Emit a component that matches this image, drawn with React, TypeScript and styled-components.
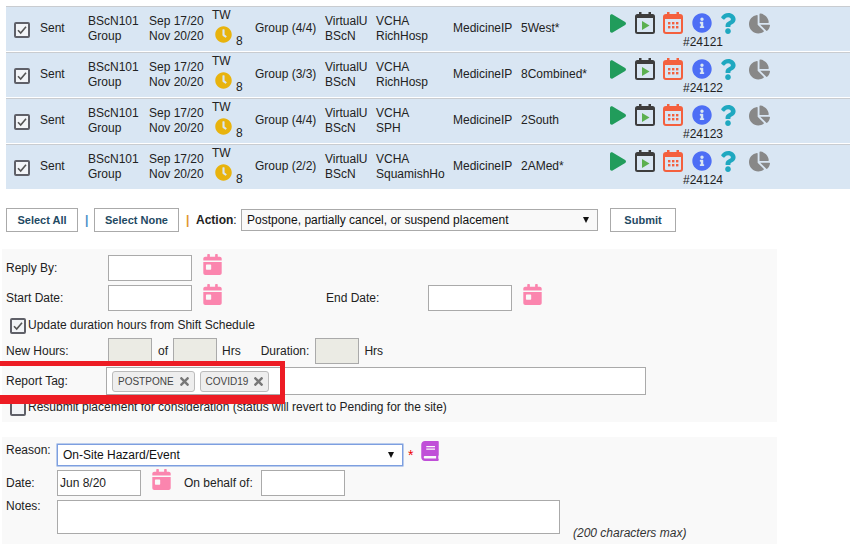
import React from 'react';
import styled, { createGlobalStyle } from 'styled-components';
import {
  FaBook,
  FaCalendarDay,
  FaChartPie,
  FaClock,
  FaInfoCircle,
  FaPlay,
  FaQuestion,
  FaTimes,
} from 'react-icons/fa';

const GlobalStyle = createGlobalStyle`
  html, body {
    margin: 0;
    padding: 0;
    background: #fff;
    overflow: hidden;
  }
  body {
    font-family: 'Liberation Sans', Arial, sans-serif;
    font-size: 12px;
    color: #222;
  }
`;

const Page = styled.div`
  position: relative;
  width: 856px;
  height: 549px;
  padding-top: 6px;
  box-sizing: border-box;
`;

/* placements table */
const Table = styled.div`
  margin-left: 6px;
  width: 844px;
`;
const Row = styled.div`
  display: grid;
  grid-template-columns: 34px 48px 61px 63px 43px 70px 51px 77px 68px 89px 1fr;
  align-items: center;
  height: 44px;
  background: #d9e6f3;
  border-top: 1px solid #c9ccd0;
  border-bottom: 1px solid #fff;
  line-height: 15px;
`;
const CheckCell = styled.div`
  padding-left: 8px;
  padding-top: 2px;
`;
const Cell = styled.div`
  padding-bottom: 2px;
  white-space: nowrap;
`;
const Stack = styled.div`
  white-space: nowrap;
`;
const Line = styled.div``;
const ClockCell = styled.div`
  align-self: start;
  padding-top: 1px;
  line-height: 14px;
`;
const ClockRow = styled.div`
  display: flex;
  align-items: flex-end;
  margin-top: 4px;
  color: #e8b30d;
`;
const Hours = styled.span`
  margin-left: 4px;
  margin-bottom: -5px;
  color: #222;
`;
const ActionCell = styled.div`
  align-self: start;
  padding-top: 5px;
`;
const IconRow = styled.div`
  display: flex;
  align-items: center;
  height: 22px;
`;
const IconSlot = styled.span<{ $w: number; $c: string }>`
  display: flex;
  justify-content: center;
  width: ${(p) => p.$w}px;
  color: ${(p) => p.$c};
`;
const PlacementId = styled.div`
  margin-left: 73px;
  margin-top: 1px;
`;

const Box = styled.span`
  display: inline-flex;
  align-items: center;
  justify-content: center;
  box-sizing: border-box;
  width: 16px;
  height: 16px;
  background: #f2f4f7;
  border: 2px solid #5f6068;
  border-radius: 2px;
  flex: none;
`;

/* action toolbar */
const Toolbar = styled.div`
  display: flex;
  align-items: center;
  margin: 18px 0 0 6px;
  height: 24px;
`;
const Button = styled.button<{ $w: number }>`
  width: ${(p) => p.$w}px;
  height: 24px;
  padding: 0;
  box-sizing: border-box;
  background: #fff;
  border: 1px solid #aaa;
  font-family: 'Liberation Sans', Arial, sans-serif;
  font-size: 11px;
  font-weight: bold;
  color: #1f4a63;
`;
const Pipe = styled.span<{ $c: string; $m: string }>`
  width: 3px;
  color: ${(p) => p.$c};
  margin: ${(p) => p.$m};
  font-weight: bold;
`;
const ActionLabel = styled.span`
  width: 45px;
  font-weight: bold;
  b {
    font-weight: normal;
  }
`;
const Select = styled.div<{ $focus?: boolean; $w: number; $bg?: string }>`
  display: flex;
  align-items: center;
  justify-content: space-between;
  box-sizing: border-box;
  width: ${(p) => p.$w}px;
  height: 22px;
  padding: 0 8px 0 5px;
  background: ${(p) => p.$bg || '#fff'};
  border: 1px solid ${(p) => (p.$focus ? '#7d9fe0' : '#aaa')};
  box-shadow: ${(p) => (p.$focus ? '0 0 0 0.5px #7d9fe0' : 'none')};
  color: #111;
`;
const Caret = styled.span`
  width: 0;
  height: 0;
  border-left: 3.5px solid transparent;
  border-right: 3.5px solid transparent;
  border-top: 6px solid #111;
`;

/* form panels */
const Panel = styled.div<{ $top: number; $h: number; $pad?: number }>`
  margin: ${(p) => p.$top}px 0 0 2px;
  padding-top: ${(p) => p.$pad || 0}px;
  width: 775px;
  height: ${(p) => p.$h}px;
  box-sizing: border-box;
  background: #f9f9f9;
`;
const FieldRow = styled.div<{ $h?: number; $mt?: number }>`
  display: flex;
  align-items: center;
  height: ${(p) => p.$h || 26}px;
  margin-top: ${(p) => p.$mt || 0}px;
  padding-left: 4px;
`;
const CheckRow = styled.div<{ $h: number; $mt: number; $pt: number }>`
  height: ${(p) => p.$h}px;
  margin-top: ${(p) => p.$mt}px;
  padding-top: ${(p) => p.$pt}px;
  box-sizing: border-box;
  padding-left: 4px;
`;
const Label = styled.span<{ $w: number }>`
  width: ${(p) => p.$w}px;
  flex: none;
`;
const Input = styled.div<{ $w?: number; $disabled?: boolean }>`
  box-sizing: border-box;
  width: ${(p) => p.$w || 84}px;
  height: 26px;
  padding-left: 2px;
  line-height: 24px;
  background: ${(p) => (p.$disabled ? '#ebebe4' : '#fff')};
  border: 1px solid #aaa;
  flex: none;
`;
const CalIcon = styled.span`
  display: flex;
  margin: -7px 0 0 10px;
  color: #fb85ae;
`;
const Gap = styled.span<{ $w: number }>`
  width: ${(p) => p.$w}px;
  flex: none;
`;
const CheckLabel = styled.label`
  display: flex;
  align-items: flex-start;
  padding-left: 4px;
  span:last-child {
    margin-left: 2px;
  }
`;
const TagInput = styled.div`
  display: flex;
  align-items: center;
  gap: 5px;
  box-sizing: border-box;
  width: 540px;
  height: 28px;
  padding-left: 5px;
  background: #fff;
  border: 1px solid #aaa;
  flex: none;
`;
const Tag = styled.span`
  display: inline-flex;
  align-items: center;
  justify-content: space-between;
  box-sizing: border-box;
  height: 21px;
  padding: 0 3px 0 5px;
  background: #eee;
  border: 1px solid #bbb;
  border-radius: 3px;
  font-size: 10px;
  color: #444;
  svg {
    color: #777;
    margin-left: 4px;
  }
`;
const ReasonRow = styled.div`
  display: flex;
  padding: 7px 0 0 4px;
`;
const TopLabel = styled.span`
  width: 51px;
  margin-top: -1px;
  flex: none;
`;
const Required = styled.span`
  margin: 3px 7px 0 5px;
  color: #e00;
  font-size: 14px;
`;
const BookIcon = styled.span`
  display: flex;
  margin-top: -3px;
  color: #c04fd8;
`;
const NotesRow = styled.div`
  display: flex;
  align-items: flex-start;
  margin-top: 4px;
  padding-left: 4px;
`;
const Notes = styled.div`
  box-sizing: border-box;
  width: 503px;
  height: 34px;
  background: #fff;
  border: 1px solid #aaa;
  flex: none;
`;
const MaxNote = styled.em`
  margin: 26px 0 0 13px;
  color: #333;
`;

/* red highlight drawn on top of the screenshot */
const Highlight = styled.div`
  position: absolute;
  left: -5px;
  top: 361px;
  width: 290px;
  height: 43px;
  box-sizing: border-box;
  border: 5px solid #ed1c24;
  border-bottom-width: 9px;
  pointer-events: none;
`;

function Check() {
  return (
    <svg width="10" height="10" viewBox="0 0 10 10">
      <path d="M1 5.2 3.7 8 9 1.8" fill="none" stroke="#555" strokeWidth="1.6" />
    </svg>
  );
}

function CalendarPlay() {
  return (
    <svg width="20" height="22" viewBox="0 0 20 22">
      <rect x="1" y="3" width="18" height="18" rx="1.5" fill="none" stroke="#3d3d3d" strokeWidth="2" />
      <rect x="1" y="3" width="18" height="3" fill="#3d3d3d" />
      <rect x="4" y="0" width="2.5" height="4" fill="#3d3d3d" />
      <rect x="13.5" y="0" width="2.5" height="4" fill="#3d3d3d" />
      <path d="M7 9v9l7.5-4.5z" fill="#5bb04f" />
    </svg>
  );
}

function CalendarGrid() {
  return (
    <svg width="20" height="22" viewBox="0 0 20 22">
      <rect x="1" y="3" width="18" height="18" rx="2" fill="none" stroke="#f4603e" strokeWidth="2" />
      <rect x="1" y="3" width="18" height="4" fill="#f4603e" />
      <rect x="4" y="0" width="2.5" height="4" fill="#f4603e" />
      <rect x="13.5" y="0" width="2.5" height="4" fill="#f4603e" />
      {[5, 9, 13].map((x) =>
        [10, 14].map((y) => <rect key={`${x}-${y}`} x={x} y={y} width="2.4" height="2.4" fill="#f4603e" />),
      )}
    </svg>
  );
}

const placements = [
  { tag: 'Group (4/4)', site: 'RichHosp', unit: '5West*', id: '#24121' },
  { tag: 'Group (3/3)', site: 'RichHosp', unit: '8Combined*', id: '#24122' },
  { tag: 'Group (4/4)', site: 'SPH', unit: '2South', id: '#24123' },
  { tag: 'Group (2/2)', site: 'SquamishHo', unit: '2AMed*', id: '#24124' },
];

function PlacementRow({ tag, site, unit, id }: (typeof placements)[number]) {
  return (
    <Row>
      <CheckCell>
        <Box>
          <Check />
        </Box>
      </CheckCell>
      <Cell>Sent</Cell>
      <Stack>
        <Line>BScN101</Line>
        <Line>Group</Line>
      </Stack>
      <Stack>
        <Line>Sep 17/20</Line>
        <Line>Nov 20/20</Line>
      </Stack>
      <ClockCell>
        <Line>TW</Line>
        <ClockRow>
          <Gap $w={3} />
          <FaClock size={17} />
          <Hours>8</Hours>
        </ClockRow>
      </ClockCell>
      <Cell>{tag}</Cell>
      <Stack>
        <Line>VirtualU</Line>
        <Line>BScN</Line>
      </Stack>
      <Stack>
        <Line>VCHA</Line>
        <Line>{site}</Line>
      </Stack>
      <Cell>MedicineIP</Cell>
      <Cell>{unit}</Cell>
      <ActionCell>
        <IconRow>
          <IconSlot $w={16} $c="#219c5b">
            <FaPlay size={19} />
          </IconSlot>
          <Gap $w={9} />
          <IconSlot $w={20} $c="#3d3d3d">
            <CalendarPlay />
          </IconSlot>
          <Gap $w={8} />
          <IconSlot $w={20} $c="#f4603e">
            <CalendarGrid />
          </IconSlot>
          <Gap $w={9} />
          <IconSlot $w={20} $c="#4d6ef5">
            <FaInfoCircle size={20} />
          </IconSlot>
          <Gap $w={8} />
          <IconSlot $w={16} $c="#1fa8c0">
            <FaQuestion size={21} />
          </IconSlot>
          <Gap $w={12} />
          <IconSlot $w={22} $c="#888">
            <FaChartPie size={21} />
          </IconSlot>
        </IconRow>
        <PlacementId>{id}</PlacementId>
      </ActionCell>
    </Row>
  );
}

function App() {
  return (
    <Page>
      <GlobalStyle />
      {/* Placements */}
      <Table>
        {placements.map((p) => (
          <PlacementRow key={p.id} {...p} />
        ))}
      </Table>

      {/* Action toolbar */}
      <Toolbar>
        <Button $w={72}>Select All</Button>
        <Pipe $c="#4a90c8" $m="0 6px 0 7px">|</Pipe>
        <Button $w={85}>Select None</Button>
        <Pipe $c="#e0962a" $m="0 7px 0 7px">|</Pipe>
        <ActionLabel>
          Action<b>:</b>
        </ActionLabel>
        <Select $w={357} $bg="#f9f9f9">
          Postpone, partially cancel, or suspend placement
          <Caret />
        </Select>
        <Gap $w={12} />
        <Button $w={66}>Submit</Button>
      </Toolbar>

      {/* Postpone details */}
      <Panel $top={17} $h={173} $pad={6}>
        <FieldRow>
          <Label $w={102}>Reply By:</Label>
          <Input />
          <CalIcon>
            <FaCalendarDay size={21} />
          </CalIcon>
        </FieldRow>
        <FieldRow $mt={4}>
          <Label $w={102}>Start Date:</Label>
          <Input />
          <CalIcon>
            <FaCalendarDay size={21} />
          </CalIcon>
          <Gap $w={103} />
          <Label $w={102}>End Date:</Label>
          <Input />
          <CalIcon>
            <FaCalendarDay size={21} />
          </CalIcon>
        </FieldRow>
        <CheckRow $h={23} $mt={4} $pt={3}>
          <CheckLabel>
            <Box>
              <Check />
            </Box>
            <span>Update duration hours from Shift Schedule</span>
          </CheckLabel>
        </CheckRow>
        <FieldRow>
          <Label $w={102}>New Hours:</Label>
          <Input $w={44} $disabled />
          <Gap $w={6} />
          of
          <Gap $w={5} />
          <Input $w={44} $disabled />
          <Gap $w={5} />
          Hrs
          <Gap $w={20} />
          Duration:
          <Gap $w={6} />
          <Input $w={44} $disabled />
          <Gap $w={5} />
          Hrs
        </FieldRow>
        <FieldRow $h={28} $mt={3}>
          <Label $w={100}>Report Tag:</Label>
          <TagInput>
            <Tag>
              POSTPONE
              <FaTimes size={13} />
            </Tag>
            <Tag>
              COVID19
              <FaTimes size={13} />
            </Tag>
          </TagInput>
        </FieldRow>
        <CheckRow $h={16} $mt={5} $pt={0}>
          <CheckLabel>
            <Box />
            <span>Resubmit placement for consideration (status will revert to Pending for the site)</span>
          </CheckLabel>
        </CheckRow>
      </Panel>

      {/* Reason */}
      <Panel $top={15} $h={107}>
        <ReasonRow>
          <TopLabel>Reason:</TopLabel>
          <Select $w={346} $focus>
            On-Site Hazard/Event
            <Caret />
          </Select>
          <Required>*</Required>
          <BookIcon>
            <FaBook size={20} />
          </BookIcon>
        </ReasonRow>
        <FieldRow $mt={4}>
          <Label $w={51}>Date:</Label>
          <Input>Jun 8/20</Input>
          <CalIcon>
            <FaCalendarDay size={21} />
          </CalIcon>
          <Gap $w={12} />
          <Label $w={77}>On behalf of:</Label>
          <Input />
        </FieldRow>
        <NotesRow>
          <TopLabel>Notes:</TopLabel>
          <Notes />
          <MaxNote>(200 characters max)</MaxNote>
        </NotesRow>
      </Panel>

      <Highlight />
    </Page>
  );
}

export default App;
